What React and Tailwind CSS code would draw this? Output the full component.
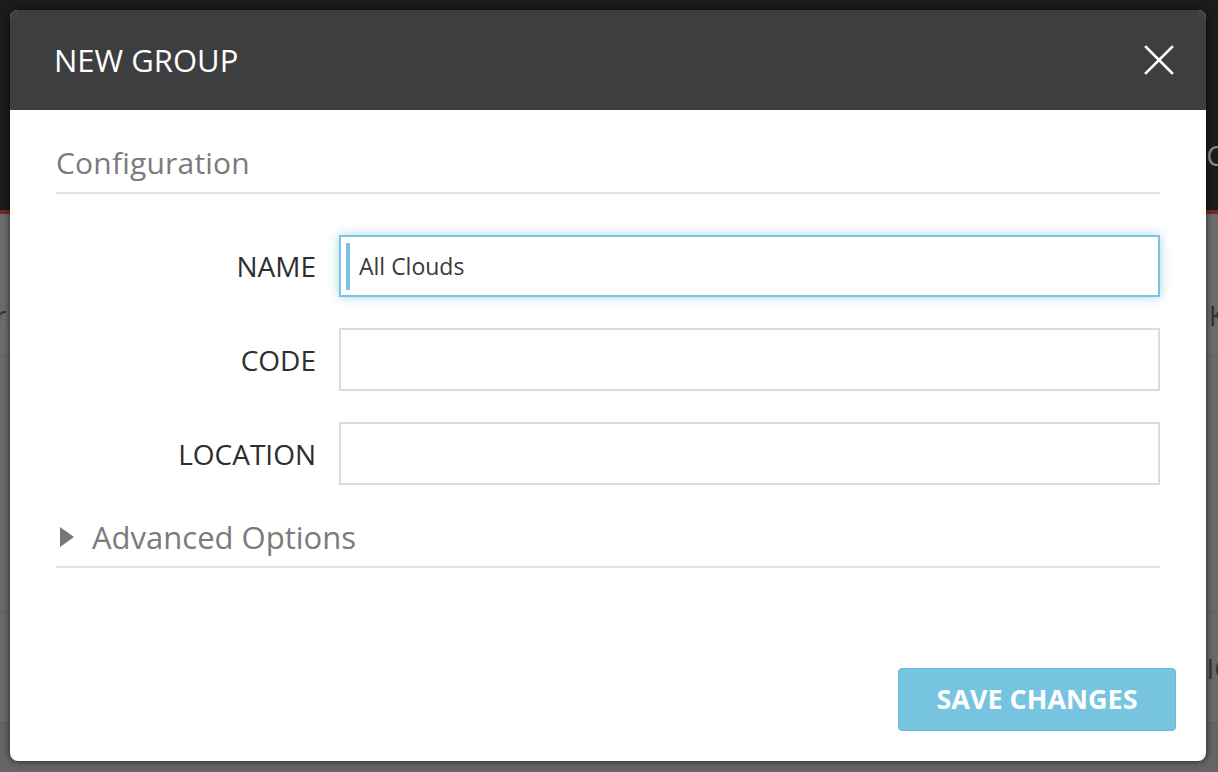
import React from 'react'

const font = { fontFamily: '"Open Sans", "Liberation Sans", sans-serif' }

function Field({ label, value, focused }) {
  return (
    <div className="flex items-center">
      <div className="w-[260px] shrink-0 text-right text-[28px] leading-[40px] text-[#2e2e2e]">{label}</div>
      <div
        className={
          focused
            ? 'ml-[23px] flex-1 h-[62px] flex items-center border-2 border-[#7cc3df] shadow-[0_0_10px_rgba(124,195,223,0.7)] bg-white'
            : 'ml-[23px] flex-1 h-[63px] flex items-center border-2 border-[#dcdcdc] bg-white'
        }
      >
        {focused && <div className="ml-[5px] w-[4px] h-[47px] bg-[#7cc3df]" />}
        {value && <span className="ml-[9px] text-[23px] text-[#3a3a3a]">{value}</span>}
      </div>
    </div>
  )
}

export default function App() {
  return (
    <div className="relative h-[772px] w-[1218px] overflow-hidden bg-[#6a6a6a]" style={font}>
      {/* page behind the overlay */}
      <div className="h-[210px] bg-[#1b1b1b] flex justify-end pt-[138px]">
        <span className="text-[28px] leading-[34px] text-[#8a8a8a] mr-[-6px]">C</span>
      </div>
      <div className="h-[4px] bg-[#6b2b27]" />
      <div className="h-[142px] bg-[#6b6b6b] border-b border-[#626262] flex justify-between items-center pt-[60px]">
        <span className="text-[28px] text-[#333] ml-[-5px]">r</span>
        <span className="text-[28px] text-[#333] mr-[-8px]">K</span>
      </div>
      <div className="h-[257px] bg-[#696969] border-b border-[#5e5e5e]" />
      <div className="h-[110px] bg-[#696969] border-b border-[#5e5e5e] flex justify-end items-center">
        <span className="text-[28px] text-[#333] mr-[-14px]">IC</span>
      </div>
      <div className="h-[48px] bg-[#646464]" />

      {/* modal */}
      <div className="absolute left-[10px] top-[10px] w-[1196px] h-[751px] rounded-[8px] overflow-hidden bg-white shadow-[0_0_6px_rgba(0,0,0,0.7)] flex flex-col">
        <div className="h-[100px] shrink-0 bg-[#3d3e40] flex items-center justify-between pl-[44px] pr-[32px]">
          <span className="text-[31px] text-white">NEW GROUP</span>
          <svg width="30" height="30" viewBox="0 0 30 30">
            <path d="M2 2 L28 28 M28 2 L2 28" stroke="#fff" strokeWidth="2.6" strokeLinecap="square" />
          </svg>
        </div>

        <div className="px-[46px] flex-1 flex flex-col">
          <div className="pt-[33px] text-[30px] leading-[40px] text-[#7b7b7b] tracking-[0.2px]">Configuration</div>
          <div className="mt-[9px] h-[2px] bg-[#e4e4e4]" />

          <div className="mt-[41px] flex flex-col gap-[31px]">
            <Field label="NAME" value="All Clouds" focused />
            <Field label="CODE" />
            <Field label="LOCATION" />
          </div>

          <div className="mt-[32px] flex items-center h-[40px]">
            <svg width="14" height="20" viewBox="0 0 14 20" className="ml-[4px]">
              <path d="M0 0 L14 10 L0 20 Z" fill="#777" />
            </svg>
            <span className="ml-[18px] text-[31px] leading-[40px] text-[#7b7b7b]">Advanced Options</span>
          </div>
          <div className="mt-[9px] h-[2px] bg-[#e4e4e4]" />

          <div className="mt-auto mr-[-16px] mb-[30px] flex justify-end">
            <button className="w-[278px] h-[63px] rounded-[4px] bg-[#77c4e0] border border-[#6bbad9] text-white text-[27px] font-bold">
              SAVE CHANGES
            </button>
          </div>
        </div>
      </div>
    </div>
  )
}
